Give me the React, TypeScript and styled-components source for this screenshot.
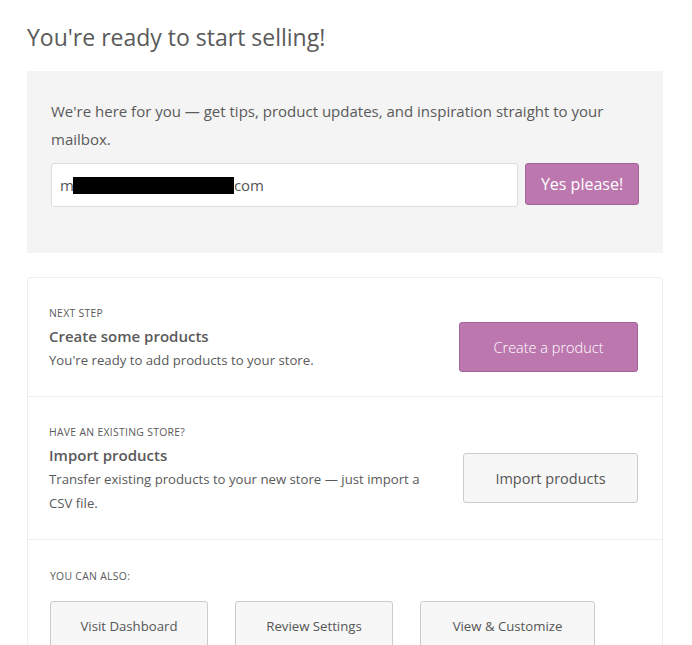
import React from 'react';
import styled, { createGlobalStyle } from 'styled-components';

const GlobalStyle = createGlobalStyle`
  body {
    margin: 0;
    background: #fff;
    font-family: "Open Sans", "Noto Sans", sans-serif;
    color: #5a5a5a;
  }
`;

const Page = styled.div`
  width: 636px;
  padding: 22px 0 0 27px;
`;

const Title = styled.h1`
  margin: 0 0 19px;
  font-size: 23px;
  font-weight: 400;
  line-height: 30px;
  color: #5a5a5a;
`;

const Newsletter = styled.div`
  background: #f4f4f4;
  padding: 26px 24px 46px;
`;

const Intro = styled.p`
  margin: 0 0 10px;
  font-size: 15px;
  line-height: 28px;
  color: #5a5a5a;
`;

const Form = styled.div`
  display: flex;
  align-items: flex-start;
  gap: 7px;
`;

const EmailField = styled.div`
  flex: 1;
  height: 42px;
  display: flex;
  align-items: center;
  padding: 0 8px;
  background: #fff;
  border: 1px solid #ddd;
  border-radius: 3px;
  font-size: 15px;
  color: #555;
`;

const Redacted = styled.span`
  display: inline-block;
  width: 161px;
  height: 17px;
  margin-left: -1px;
  background: #000;
`;

const Button = styled.button<{ $primary?: boolean; $width: number; $height: number }>`
  width: ${(p) => p.$width}px;
  height: ${(p) => p.$height}px;
  flex: none;
  padding: 0;
  font-family: "Open Sans", "Noto Sans", sans-serif;
  font-size: 15px;
  font-weight: ${(p) => (p.$primary ? 300 : 400)};
  border-radius: 3px;
  cursor: pointer;
  color: ${(p) => (p.$primary ? '#fff' : '#555')};
  background: ${(p) => (p.$primary ? '#bb77ae' : '#f7f7f7')};
  border: 1px solid ${(p) => (p.$primary ? '#a36597' : '#ccc')};
`;

const SubmitButton = styled(Button)`
  font-weight: 400;
  font-size: 16px;
`;

const StepButton = styled(Button)`
  margin-top: 16px;
  font-size: 14.5px;
`;

const Steps = styled.div`
  margin-top: 24px;
  border: 1px solid #eee;
  border-radius: 4px;
`;

const Step = styled.div`
  display: flex;
  align-items: center;
  justify-content: space-between;
  padding: 28px 24px 24px 21px;
  border-bottom: 1px solid #eee;
`;

const StepText = styled.div`
  max-width: 380px;
`;

const Label = styled.div`
  font-size: 10.4px;
  text-transform: uppercase;
  letter-spacing: 0.3px;
  line-height: 14px;
  margin-bottom: 4px;
  color: #5a5a5a;
`;

const StepTitle = styled.h3`
  margin: 0;
  font-size: 15px;
  font-weight: 600;
  line-height: 24px;
  color: #5a5a5a;
`;

const StepDesc = styled.p`
  margin: 0;
  font-size: 13.2px;
  line-height: 24px;
  color: #5a5a5a;
`;

const AlsoRow = styled.div`
  padding: 29px 21px 0 22px;
`;

const AlsoButtons = styled.div`
  display: flex;
  gap: 27px;
  margin-top: 18px;
`;

const ActionButton = styled.button<{ $width: number }>`
  width: ${(p) => p.$width}px;
  height: 49px;
  font-family: "Open Sans", "Noto Sans", sans-serif;
  font-size: 13.2px;
  color: #555;
  background: #f7f7f7;
  border: 1px solid #ccc;
  border-radius: 3px;
`;

export default function App() {
  return (
    <>
      <GlobalStyle />
      <Page>
        <Title>You're ready to start selling!</Title>
        <Newsletter>
          <Intro>
            We're here for you — get tips, product updates, and inspiration straight to your mailbox.
          </Intro>
          <Form>
            <EmailField>
              m<Redacted />com
            </EmailField>
            <SubmitButton $primary $width={114} $height={42}>
              Yes please!
            </SubmitButton>
          </Form>
        </Newsletter>
        <Steps>
          <Step>
            <StepText>
              <Label>Next step</Label>
              <StepTitle>Create some products</StepTitle>
              <StepDesc>You're ready to add products to your store.</StepDesc>
            </StepText>
            <StepButton $primary $width={179} $height={50}>
              Create a product
            </StepButton>
          </Step>
          <Step>
            <StepText>
              <Label>Have an existing store?</Label>
              <StepTitle>Import products</StepTitle>
              <StepDesc>
                Transfer existing products to your new store — just import a CSV file.
              </StepDesc>
            </StepText>
            <StepButton $width={175} $height={50}>
              Import products
            </StepButton>
          </Step>
          <AlsoRow>
            <Label>You can also:</Label>
            <AlsoButtons>
              <ActionButton $width={158}>Visit Dashboard</ActionButton>
              <ActionButton $width={158}>Review Settings</ActionButton>
              <ActionButton $width={175}>View &amp; Customize</ActionButton>
            </AlsoButtons>
          </AlsoRow>
        </Steps>
      </Page>
    </>
  );
}
